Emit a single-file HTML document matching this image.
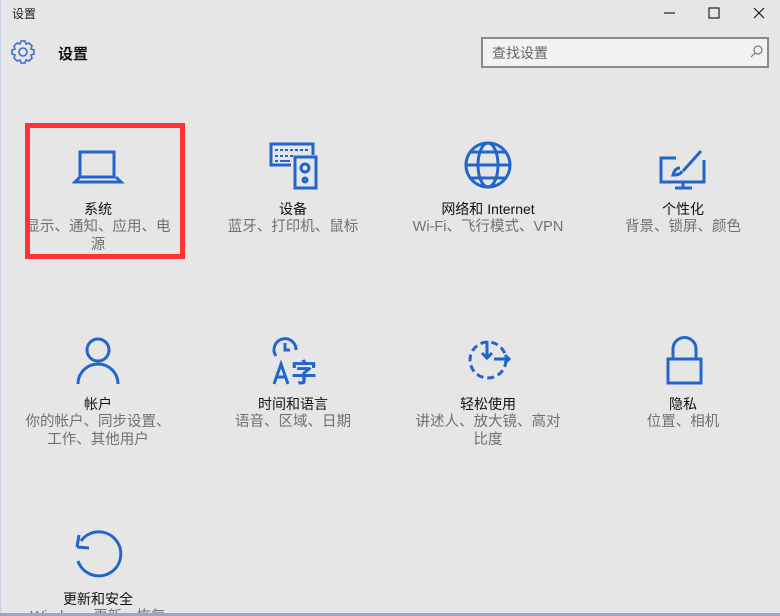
<!DOCTYPE html>
<html><head><meta charset="utf-8"><style>
html,body{margin:0;width:780px;height:616px;overflow:hidden}
body{background:#e6e6e6;font-family:"Liberation Sans","Noto Sans CJK SC",sans-serif;position:relative}
.t{position:absolute;font-size:12px;color:#222}
.item{position:absolute;width:170px;text-align:center}
.item .h{font-size:14px;color:#111;line-height:18px}
.item .s{font-size:14.5px;color:#707070;line-height:18px}
svg{position:absolute}
</style></head><body>
<div style="position:absolute;left:0;top:0;width:1px;height:616px;background:#c8cfe0"></div>
<div class="t" style="left:12px;top:5px">设置</div>
<div style="position:absolute;left:58px;top:43px;font-size:15px;font-weight:bold;color:#111">设置</div>
<div style="position:absolute;left:492px;top:43px;font-size:14px;color:#666">查找设置</div>

<div class="item" style="left:13px;top:200px"><div class="h">系统</div><div class="s">显示、通知、应用、电<br>源</div></div>
<div class="item" style="left:208px;top:200px"><div class="h">设备</div><div class="s">蓝牙、打印机、鼠标</div></div>
<div class="item" style="left:403px;top:200px"><div class="h">网络和 Internet</div><div class="s">Wi-Fi、飞行模式、VPN</div></div>
<div class="item" style="left:598px;top:200px"><div class="h">个性化</div><div class="s">背景、锁屏、颜色</div></div>
<div class="item" style="left:13px;top:395px"><div class="h">帐户</div><div class="s">你的帐户、同步设置、<br>工作、其他用户</div></div>
<div class="item" style="left:208px;top:395px"><div class="h">时间和语言</div><div class="s">语音、区域、日期</div></div>
<div class="item" style="left:403px;top:395px"><div class="h">轻松使用</div><div class="s">讲述人、放大镜、高对<br>比度</div></div>
<div class="item" style="left:598px;top:395px"><div class="h">隐私</div><div class="s">位置、相机</div></div>
<div class="item" style="left:13px;top:590px"><div class="h">更新和安全</div><div class="s">Windows 更新、恢复</div></div>

<svg style="left:0;top:0" width="780" height="616">
<rect x="0" y="613" width="780" height="3" fill="#9aa6c8"/>
<g stroke="#222" stroke-width="1.2" fill="none">
<line x1="664" y1="13" x2="675" y2="13"/>
<rect x="709" y="8" width="10" height="10"/>
<line x1="754" y1="8" x2="764" y2="18"/><line x1="764" y1="8" x2="754" y2="18"/>
</g>
<g stroke="#3a6fd0" stroke-width="1.6" fill="none">
<circle cx="23" cy="52" r="4"/>
<path d="M21 41h4l1 3 3-1 3 3-1 3 3 1v4l-3 1 1 3-3 3-3-1-1 3h-4l-1-3-3 1-3-3 1-3-3-1v-4l3-1-1-3 3-3 3 1z"/>
</g>
<g stroke="#2266cc" stroke-width="3" fill="none">
<rect x="80" y="152" width="34" height="25"/>
<path d="M80 177l-5 5h46l-5-5"/>
<rect x="295" y="157" width="21" height="31"/>
<circle cx="305" cy="168" r="4"/><circle cx="305" cy="180" r="2"/>
<path d="M291 165h-20v-21h42v11"/>
<circle cx="488" cy="165" r="22"/>
<ellipse cx="488" cy="165" rx="10" ry="22"/>
<line x1="466" y1="165" x2="510" y2="165"/>
<path d="M470 152h36M470 178h36"/>
<path d="M676 158h-15v24h43v-22"/>
<line x1="683" y1="182" x2="683" y2="188"/><line x1="675" y1="188" x2="692" y2="188"/>
<path d="M701 151l-18 20"/><path d="M680 168c-4 0-6 3-7 7 4 0 8-1 9-4"/>
<circle cx="98" cy="350" r="11"/>
<path d="M78 384a20 20 0 0 1 40 0"/>
<path d="M276 356a11 11 0 1 1 20 -6"/><path d="M285 343v7h5"/>
<path d="M274 384l7-20 7 20M277 377h9"/>
<circle cx="488" cy="360" r="18" stroke-dasharray="7 4"/>
<path d="M487 341v17M482 353l5 5 5-5M494 359h15M505 355l4 4-4 4"/>
<rect x="668" y="359" width="33" height="24"/>
<path d="M673 359v-10a11 11 0 0 1 23 0v10"/>
<path d="M81 541a22 22 0 1 1 -3 20"/><path d="M77 547l2 -12M77 547l12 1"/>
</g>
<g fill="#2266cc">
<rect x="275" y="149" width="3" height="2"/><rect x="280" y="149" width="3" height="2"/><rect x="285" y="149" width="3" height="2"/><rect x="290" y="149" width="3" height="2"/><rect x="295" y="149" width="3" height="2"/><rect x="300" y="149" width="3" height="2"/><rect x="305" y="149" width="3" height="2"/>
<rect x="275" y="155" width="3" height="2"/><rect x="280" y="155" width="3" height="2"/><rect x="285" y="155" width="3" height="2"/><rect x="290" y="155" width="3" height="2"/>
<rect x="275" y="160" width="3" height="2"/><rect x="280" y="160" width="10" height="2"/>
</g>
<text x="291" y="382" font-size="26" fill="#2266cc" font-family="Noto Sans CJK SC,sans-serif" font-weight="bold">字</text>
<rect x="27.5" y="125.5" width="155" height="131" fill="none" stroke="#ff3333" stroke-width="5"/>
<rect x="482" y="38" width="286" height="29" fill="#f2f2f2" stroke="#8a8a8a" stroke-width="2"/>
<g stroke="#777" stroke-width="1.2" fill="none"><circle cx="758" cy="50" r="4"/><line x1="755" y1="53" x2="751" y2="57"/></g>
</svg>
<div style="position:absolute;left:492px;top:43px;font-size:14px;color:#666">查找设置</div>
</body></html>
